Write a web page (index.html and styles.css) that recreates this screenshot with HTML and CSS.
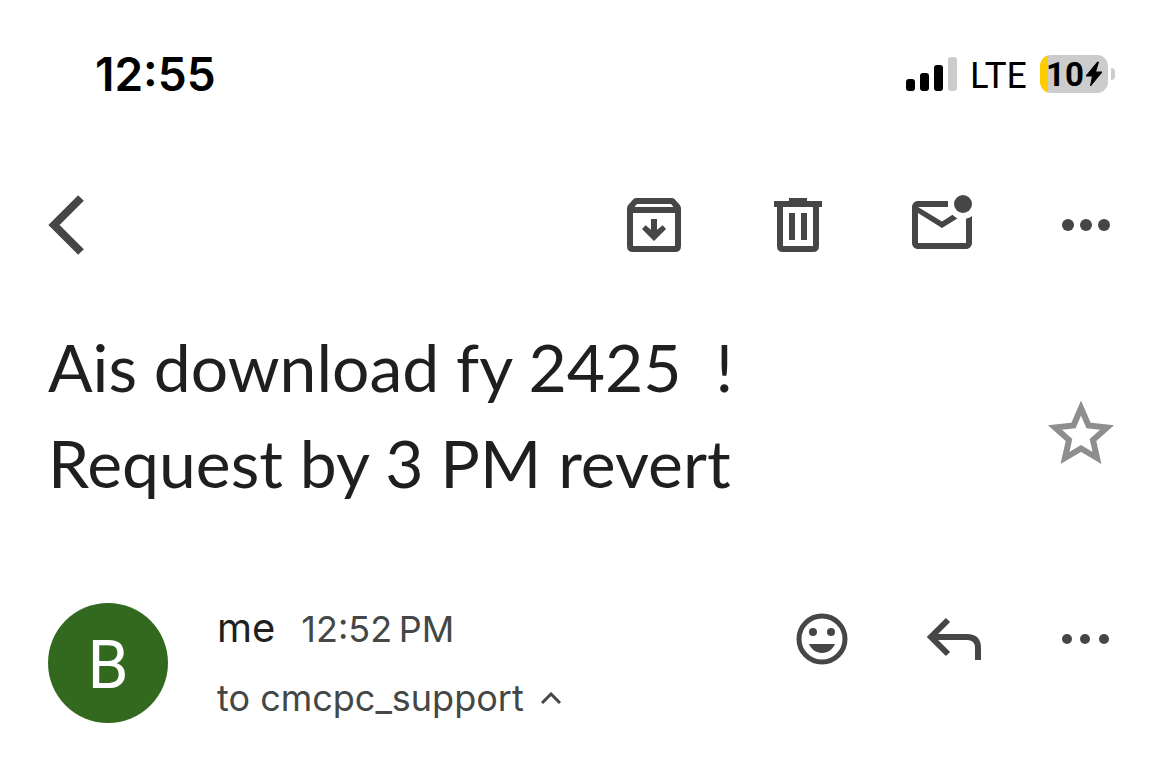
FILE: index.html
```html
<!DOCTYPE html>
<html lang="en">
<head>
  <meta charset="UTF-8" />
  <meta name="viewport" content="width=device-width, initial-scale=1.0"/>
  <title>Ais download fy 2425 ! Request by 3 PM revert</title>
  <link rel="stylesheet" href="styles.css">
</head>
<body>
  <div class="status-bar">
    <div class="clock">12:55</div>
    <div class="status-icons">
      <svg class="signal" viewBox="0 0 51 34">
        <rect x="0" y="22" width="9" height="12" rx="3"/>
        <rect x="14" y="16" width="9" height="18" rx="3"/>
        <rect x="28" y="8" width="9" height="26" rx="3"/>
        <rect class="signal-off" x="42" y="0" width="9" height="34" rx="3"/>
      </svg>
      <span class="network">LTE</span>
      <div class="battery">
        <div class="battery-body">
          <span>10</span>
          <svg class="bolt" viewBox="0 0 16 26"><path d="M11.500 1 L0 15 H6.500 L4.500 25 L16 11 H9.500 L12.500 1 Z" stroke="currentColor" stroke-linejoin="round"/></svg>
        </div>
        <div class="battery-tip"></div>
      </div>
    </div>
  </div>

  <nav class="toolbar">
    <button class="btn-back" aria-label="Back">
      <svg viewBox="0 0 36 60"><path d="M33 3 L6 30 L33 57" fill="none" stroke="currentColor" stroke-width="8"/></svg>
    </button>
    <div class="toolbar-actions">
      <button class="btn-icon" aria-label="Archive">
        <svg viewBox="0 0 24 24">
          <path fill-rule="evenodd" d="M6.200 3H17.800Q18.500 3 18.900 3.400L20.600 5.300Q21 5.800 21 6.500V19Q21 21 19 21H5Q3 21 3 19V6.500Q3 5.800 3.400 5.300L5.100 3.400Q5.500 3 6.200 3ZM6.300 5L5.500 6H18.500L17.700 5ZM5 8V19H19V8Z"/>
          <path d="M11 10H13V13.600L14.900 12.100L16 13.300L12 17.300L8 13.300L9.200 12.100L11 13.600Z"/>
        </svg>
      </button>
      <button class="btn-icon" aria-label="Delete">
        <svg viewBox="0 0 24 24">
          <path fill-rule="evenodd" d="M9 3H15V4H20V6H19V19Q19 21 17 21H7Q5 21 5 19V6H4V4H9ZM7 6V19H17V6ZM9 8H11V17H9ZM13 8H15V17H13Z"/>
        </svg>
      </button>
      <button class="btn-icon" aria-label="Mark as unread">
        <svg viewBox="0 0 24 24">
          <path d="M14 4H4C2.900 4 2 4.900 2 6V18C2 19.100 2.900 20 4 20H20C21.100 20 22 19.100 22 18V9C21.400 9.500 20.700 9.800 20 9.900V18H4V8L12 13L17.100 9.800C16.500 9.500 16 9.100 15.500 8.600L12 10.800L4 6H14Z"/>
          <circle cx="19" cy="5" r="3"/>
        </svg>
      </button>
      <button class="btn-icon" aria-label="More options">
        <svg viewBox="0 0 24 24">
          <circle cx="6" cy="12" r="2"/>
          <circle cx="12" cy="12" r="2"/>
          <circle cx="18" cy="12" r="2"/>
        </svg>
      </button>
    </div>
  </nav>

  <header class="subject">
    <h1>Ais download fy 2425 &nbsp;!<br>Request by 3 PM revert</h1>
    <button class="btn-icon btn-star" aria-label="Star">
      <svg viewBox="0 0 72 72">
        <path d="M36 11L43.500 28.500L62 30.500L48 43L52 61L36 51.500L20 61L24 43L10 30.500L28.500 28.500Z" fill="none" stroke="currentColor" stroke-width="6"/>
      </svg>
    </button>
  </header>

  <section class="message">
    <div class="avatar">B</div>
    <div class="sender">
      <div class="sender-line">
        <span class="sender-name">me</span>
        <span class="sender-time">12:52&#8239;PM</span>
      </div>
      <button class="recipient">
        to cmcpc_support
        <svg viewBox="0 0 20 12"><path d="M1 11 L10 2 L19 11" fill="none" stroke="currentColor" stroke-width="3"/></svg>
      </button>
    </div>
    <div class="message-actions">
      <button class="btn-icon" aria-label="Add reaction">
        <svg viewBox="0 0 72 72">
          <circle cx="36" cy="36" r="23" fill="none" stroke="currentColor" stroke-width="5"/>
          <circle cx="27" cy="29" r="4"/>
          <circle cx="45" cy="29" r="4"/>
          <path d="M23 41H49C47 46 42 50 36 50S25 46 23 41Z"/>
        </svg>
      </button>
      <button class="btn-icon" aria-label="Reply">
        <svg viewBox="0 0 72 72">
          <path d="M30 17L13 34L30 51M13 34H49Q60 34 60 45V57" fill="none" stroke="currentColor" stroke-width="6"/>
        </svg>
      </button>
      <button class="btn-icon" aria-label="More message options">
        <svg viewBox="0 0 72 72">
          <circle cx="17" cy="36" r="5"/>
          <circle cx="35" cy="36" r="5"/>
          <circle cx="54" cy="36" r="5"/>
        </svg>
      </button>
    </div>
  </section>
</body>
</html>
```
FILE: styles.css
```css
* {
  box-sizing: border-box;
}

body {
  margin: 0;
  background: #fff;
  color: #1f1f1f;
  font-family: 'Inter', 'Liberation Sans', sans-serif;
}

button {
  padding: 0;
  border: none;
  background: none;
  color: #444746;
  font-family: inherit;
  cursor: pointer;
}

svg {
  display: block;
  fill: currentColor;
}

/* Status bar */
.status-bar {
  display: flex;
  justify-content: space-between;
  align-items: center;
  height: 148px;
  padding: 0 55px 0 95px;
  color: #000;
}

.clock {
  font-size: 46px;
  font-weight: 600;
}

.status-icons {
  display: flex;
  align-items: center;
  gap: 13px;
}

.signal {
  width: 51px;
  height: 34px;
}

.signal-off {
  fill: #ccc;
}

.network {
  font-family: 'Lato', sans-serif;
  font-size: 36px;
  line-height: 40px;
}

.battery {
  display: flex;
  align-items: center;
  gap: 3px;
}

.battery-body {
  display: flex;
  align-items: center;
  justify-content: center;
  gap: 2px;
  width: 68px;
  height: 38px;
  border-radius: 11px;
  background: linear-gradient(90deg, #ffcc00 8px, #ccc 8px);
  font-family: 'Roboto', sans-serif;
  font-size: 33px;
  font-weight: 700;
}

.bolt {
  width: 16px;
  height: 26px;
}

.battery-tip {
  width: 4px;
  height: 12px;
  border-radius: 0 4px 4px 0;
  background: #ccc;
}

/* Toolbar */
.toolbar {
  display: flex;
  justify-content: space-between;
  align-items: center;
  height: 154px;
  padding: 0 48px;
}

.btn-back svg {
  width: 36px;
  height: 60px;
}

.toolbar-actions {
  display: flex;
  gap: 72px;
}

.btn-icon svg {
  width: 72px;
  height: 72px;
}

/* Subject */
.subject {
  display: flex;
  justify-content: space-between;
  align-items: flex-start;
  padding: 17px 53px 0 48px;
}

h1 {
  margin: 0;
  font-family: 'Lato', sans-serif;
  font-size: 66px;
  font-weight: 400;
  line-height: 96px;
}

.btn-star {
  margin-top: 78px;
  color: #8e8e8e;
}

/* Message header */
.message {
  display: flex;
  align-items: flex-start;
  padding: 92px 48px 0;
}

.avatar {
  display: flex;
  align-items: center;
  justify-content: center;
  width: 120px;
  height: 120px;
  padding-top: 4px;
  border-radius: 50%;
  background: #33691e;
  color: #fff;
  font-family: 'Roboto', sans-serif;
  font-size: 66px;
}

.sender {
  flex: 1;
  padding-left: 49px;
}

.sender-line {
  display: flex;
  align-items: baseline;
  gap: 26px;
  line-height: 50px;
}

.sender-name {
  font-size: 40px;
}

.sender-time {
  color: #444746;
  font-size: 36px;
}

.recipient {
  display: flex;
  align-items: center;
  gap: 17px;
  margin-top: 20px;
  font-size: 36px;
  line-height: 48px;
}

.recipient svg {
  width: 20px;
  height: 12px;
}

.message-actions {
  display: flex;
  gap: 60px;
}
```
